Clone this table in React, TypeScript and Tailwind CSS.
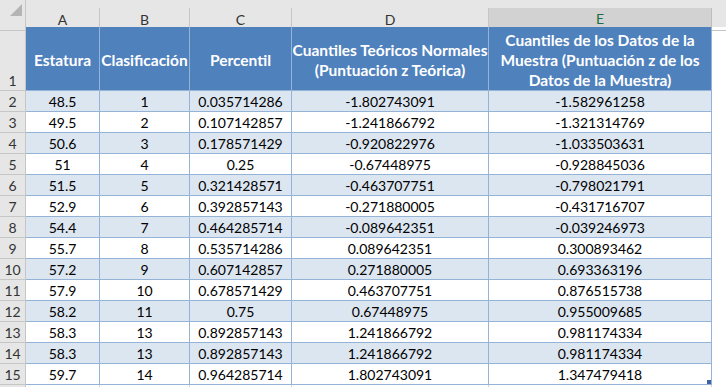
import React from 'react';

const rows: [string, string, string, string, string][] = [
    ['48.5', '1', '0.035714286', '-1.802743091', '-1.582961258'],
    ['49.5', '2', '0.107142857', '-1.241866792', '-1.321314769'],
    ['50.6', '3', '0.178571429', '-0.920822976', '-1.033503631'],
    ['51', '4', '0.25', '-0.67448975', '-0.928845036'],
    ['51.5', '5', '0.321428571', '-0.463707751', '-0.798021791'],
    ['52.9', '6', '0.392857143', '-0.271880005', '-0.431716707'],
    ['54.4', '7', '0.464285714', '-0.089642351', '-0.039246973'],
    ['55.7', '8', '0.535714286', '0.089642351', '0.300893462'],
    ['57.2', '9', '0.607142857', '0.271880005', '0.693363196'],
    ['57.9', '10', '0.678571429', '0.463707751', '0.876515738'],
    ['58.2', '11', '0.75', '0.67448975', '0.955009685'],
    ['58.3', '13', '0.892857143', '1.241866792', '0.981174334'],
    ['58.3', '13', '0.892857143', '1.241866792', '0.981174334'],
    ['59.7', '14', '0.964285714', '1.802743091', '1.347479418'],
];

const cols = 'grid grid-cols-[26px_74px_90px_102px_197px_223px_1fr]';
const rowHead = 'bg-[#e6e6e6] border-r border-b border-[#c6c6c6] text-[#333] text-[14px] flex items-end justify-center pb-[1px] leading-[17px]';

const App: React.FC = () => {
    return (
        <div className="w-[726px] h-[387px] overflow-hidden bg-white font-['Lato',sans-serif] text-[14px] text-black">
            {/* Top strip */}
            <div className="flex h-[8px] bg-[#e6e6e6]">
                <div className="w-[26px] border-r border-[#c6c6c6]" />
            </div>

            {/* Column letters */}
            <div className={`${cols} h-[19px] bg-[#e6e6e6] text-[14px] text-[#333]`}>
                <div className="relative border-r border-b border-[#c6c6c6]">
                    <div className="absolute left-[10px] -top-[4px] w-0 h-0 border-l-[12px] border-l-transparent border-b-[12px] border-b-[#b4b4b4]" />
                </div>
                {['A', 'B', 'C', 'D'].map((c) => (
                    <div key={c} className="flex items-center justify-center border-r border-b border-[#c6c6c6]">
                        {c}
                    </div>
                ))}
                <div className="flex items-center justify-center bg-[#d2d2d2] border-r border-[#bdbdbd] border-b-2 border-b-[#217346] text-[#1e6e3f]">
                    E
                </div>
                <div className="border-b border-[#c6c6c6]" />
            </div>

            {/* Header row */}
            <div className={`${cols} h-[64px]`}>
                <div className={rowHead}>1</div>
                {[
                    ['Estatura'],
                    ['Clasificación'],
                    ['Percentil'],
                    ['Cuantiles Teóricos Normales', '(Puntuación z Teórica)'],
                    ['Cuantiles de los Datos de la', 'Muestra (Puntuación z de los', 'Datos de la Muestra)'],
                ].map((lines, i) => (
                    <div
                        key={i}
                        className="flex flex-col items-center justify-center pt-[3px] bg-[#4f81bd] border-r border-b border-[#95b3d7] text-white font-bold text-[15.5px] leading-[20px] text-center"
                    >
                        {lines.map((l) => (
                            <span key={l} className="whitespace-nowrap">{l}</span>
                        ))}
                    </div>
                ))}
                <div />
            </div>

            {/* Data rows */}
            {rows.map((r, i) => {
                const bg = i % 2 === 0 ? 'bg-[#dce6f1]' : 'bg-white';
                const last = i === rows.length - 1;
                return (
                    <div key={i} className={`${cols} h-[21px]`}>
                        <div className={rowHead}>{i + 2}</div>
                        {r.map((v, j) => (
                            <div
                                key={j}
                                className={`relative flex items-end justify-center pb-[1px] leading-[17px] border-r border-b border-[#95b3d7] ${bg}`}
                            >
                                {v}
                                {last && j === 4 && (
                                    <div className="absolute right-[0px] bottom-[0px] w-[4px] h-[4px] bg-[#3d64a0]" />
                                )}
                            </div>
                        ))}
                        <div />
                    </div>
                );
            })}

            {/* Next row, only its top edge shows */}
            <div className={`${cols} h-[21px]`}>
                <div className="bg-[#e6e6e6] border-r border-[#c6c6c6]" />
                {[0, 1, 2, 3, 4].map((j) => (
                    <div key={j} className="border-r border-[#d4d4d4]" />
                ))}
                <div />
            </div>
        </div>
    );
};

export default App;
